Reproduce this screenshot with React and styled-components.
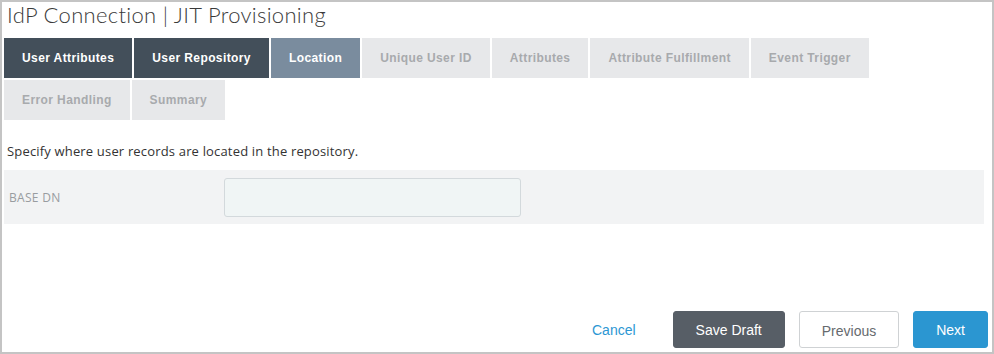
import React from 'react';
import styled, { createGlobalStyle } from 'styled-components';

const GlobalStyle = createGlobalStyle`
  html, body {
    margin: 0;
    padding: 0;
    background: #fff;
  }
  body {
    font-family: "Open Sans", "Liberation Sans", sans-serif;
    color: #333;
  }
`;

const Frame = styled.div`
  box-sizing: border-box;
  width: 994px;
  height: 354px;
  border: 2px solid #c4c4c4;
  display: flex;
  flex-direction: column;
  padding: 0 4px 4px 2px;
  overflow: hidden;
`;

const Title = styled.h1`
  margin: 0;
  padding: 0 0 0 3px;
  height: 36px;
  font-family: "Lato", "Open Sans", sans-serif;
  font-weight: 300;
  font-size: 22px;
  line-height: 26px;
  color: #3a3a3a;
  letter-spacing: 0.3px;
`;

const Tabs = styled.div`
  display: flex;
  flex-wrap: wrap;
  column-gap: 2px;
  row-gap: 2px;
  width: 880px;
`;

const tabColors = {
  done: { bg: '#434f5a', fg: '#ffffff' },
  current: { bg: '#7a8c9e', fg: '#ffffff' },
  todo: { bg: '#e7e8ea', fg: '#a8aaad' },
};

const Tab = styled.div`
  height: 40px;
  padding: 0 18px;
  display: flex;
  align-items: center;
  background: ${(p) => tabColors[p.state].bg};
  color: ${(p) => tabColors[p.state].fg};
  font-family: "Liberation Sans", Arial, sans-serif;
  font-weight: 700;
  font-size: 12px;
  letter-spacing: 0.4px;
  white-space: nowrap;
`;

const Intro = styled.p`
  margin: 22px 0 0 3px;
  font-size: 13px;
  line-height: 18px;
  letter-spacing: 0.17px;
  color: #333;
`;

const FieldRow = styled.div`
  margin: 10px 4px 0 0;
  height: 54px;
  background: #f2f3f4;
  display: flex;
  align-items: center;
`;

const FieldLabel = styled.label`
  box-sizing: border-box;
  width: 220px;
  padding-left: 5px;
  font-size: 12px;
  color: #999ca0;
  letter-spacing: 0.3px;
`;

const TextInput = styled.input`
  box-sizing: border-box;
  width: 297px;
  height: 39px;
  background: #f0f5f5;
  border: 1px solid #d3d9dc;
  border-radius: 3px;
  outline: none;
`;

const Footer = styled.div`
  margin-top: auto;
  display: flex;
  justify-content: flex-end;
  gap: 14px;
`;

const variants = {
  link: { bg: 'transparent', fg: '#2d97d3', border: 'transparent' },
  dark: { bg: '#575e66', fg: '#ffffff', border: '#575e66' },
  plain: { bg: '#ffffff', fg: '#666a6e', border: '#cfd2d4' },
  primary: { bg: '#2b96d1', fg: '#ffffff', border: '#2b96d1' },
};

const Button = styled.button`
  box-sizing: border-box;
  height: 37px;
  padding: 0 22px;
  border: 1px solid ${(p) => variants[p.variant].border};
  border-radius: 3px;
  background: ${(p) => variants[p.variant].bg};
  color: ${(p) => variants[p.variant].fg};
  font-family: "Liberation Sans", Arial, sans-serif;
  font-size: 14px;
  cursor: pointer;
  padding-top: ${(p) => (p.variant === 'plain' ? '3px' : '0')};
`;

const steps = [
  ['User Attributes', 'done'],
  ['User Repository', 'done'],
  ['Location', 'current'],
  ['Unique User ID', 'todo'],
  ['Attributes', 'todo'],
  ['Attribute Fulfillment', 'todo'],
  ['Event Trigger', 'todo'],
  ['Error Handling', 'todo'],
  ['Summary', 'todo'],
];

const App = () => {
  const [baseDn, setBaseDn] = React.useState('');

  return (
    <>
      <GlobalStyle />
      <Frame>
        <Title>IdP Connection | JIT Provisioning</Title>
        <Tabs>
          {steps.map(([label, state]) => (
            <Tab key={label} state={state}>{label}</Tab>
          ))}
        </Tabs>
        <Intro>Specify where user records are located in the repository.</Intro>
        <FieldRow>
          <FieldLabel>BASE DN</FieldLabel>
          <TextInput type="text" value={baseDn} onChange={(e) => setBaseDn(e.target.value)} />
        </FieldRow>
        <Footer>
          <Button variant="link">Cancel</Button>
          <Button variant="dark">Save Draft</Button>
          <Button variant="plain">Previous</Button>
          <Button variant="primary">Next</Button>
        </Footer>
      </Frame>
    </>
  );
};

export default App;
